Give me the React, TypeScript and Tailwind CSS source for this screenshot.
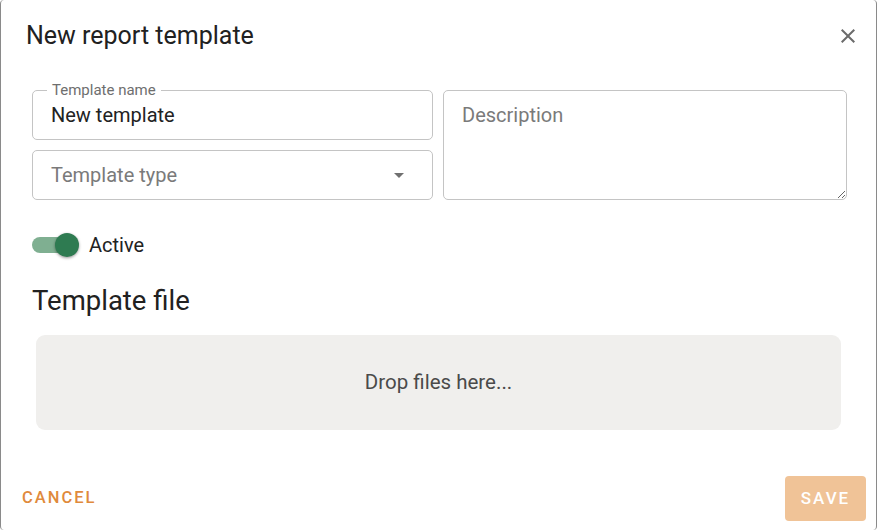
import { useState } from 'react';

function CloseIcon() {
  return (
    <svg viewBox="0 0 24 24" className="h-6 w-6 fill-[#6b6b6b]">
      <path d="M19 6.41 17.59 5 12 10.59 6.41 5 5 6.41 10.59 12 5 17.59 6.41 19 12 13.41 17.59 19 19 17.59 13.41 12z" />
    </svg>
  );
}

export default function App() {
  const [active, setActive] = useState(true);

  return (
    <div className="h-[530px] w-[877px] bg-white font-['Roboto','Liberation_Sans',sans-serif]">
      <div className="flex h-full flex-col rounded-[4px] border-x border-[#8a8a8a] bg-white">
        <div className="flex items-center justify-between pl-[25px] pr-[12px] pt-[20px]">
          <h2 className="text-[25px] leading-[32px] text-[#212121]">New report template</h2>
          <button className="flex h-8 w-8 items-center justify-center">
            <CloseIcon />
          </button>
        </div>

        <div className="mt-[38px] grid grid-cols-[401px_1fr] gap-x-[10px] pl-[31px] pr-[29px]">
          <div className="flex flex-col gap-[10px]">
            <div className="relative h-[50px] rounded-[5px] border border-[#c4c4c4]">
              <span className="absolute -top-[9px] left-[14px] bg-white px-[5px] text-[15px] leading-[16px] text-[#6e6e6e]">
                Template name
              </span>
              <input
                defaultValue="New template"
                className="h-full w-full bg-transparent px-[18px] text-[20px] text-[#222] outline-none"
              />
            </div>
            <div className="flex h-[50px] items-center justify-between rounded-[5px] border border-[#c4c4c4] pl-[18px] pr-[21px]">
              <span className="text-[20px] text-[#7a7a7a]">Template type</span>
              <svg viewBox="0 0 24 24" className="h-6 w-6 fill-[#707070]">
                <path d="M7 10l5 5 5-5z" />
              </svg>
            </div>
          </div>
          <textarea
            placeholder="Description"
            className="h-[110px] resize-y rounded-[5px] border border-[#c4c4c4] px-[18px] py-[11px] text-[20px] leading-[26px] text-[#222] outline-none placeholder:text-[#7a7a7a]"
          />
        </div>

        <div className="mt-[30px] flex items-center gap-[9px] pl-[31px]">
          <button
            onClick={() => setActive(!active)}
            className="relative h-[24px] w-[48px]"
          >
            <span className="absolute left-0 top-[4px] h-[16px] w-[42px] rounded-full bg-[#7faf91]" />
            <span className="absolute left-[23px] top-0 h-[24px] w-[24px] rounded-full bg-[#2e7b51] shadow-[0_1px_3px_rgba(0,0,0,0.4)]" />
          </button>
          <span className="text-[20px] text-[#222]">Active</span>
        </div>

        <h3 className="mt-[24px] pl-[31px] text-[27.5px] leading-[34px] text-[#212121]">Template file</h3>

        <div className="mx-[35px] mt-[17px] flex h-[95px] items-center justify-center rounded-[9px] bg-[#f0efed]">
          <span className="text-[20.5px] text-[#4a4a4a]">Drop files here...</span>
        </div>

        <div className="mt-auto flex items-center justify-between pb-[9px] pl-[21px] pr-[10px]">
          <button className="text-[16.5px] font-medium tracking-[2px] text-[#e08a3c]">CANCEL</button>
          <button className="h-[45px] w-[81px] rounded-[4px] bg-[#f0c397] text-[17px] font-medium tracking-[2px] text-white">
            SAVE
          </button>
        </div>
      </div>
    </div>
  );
}
